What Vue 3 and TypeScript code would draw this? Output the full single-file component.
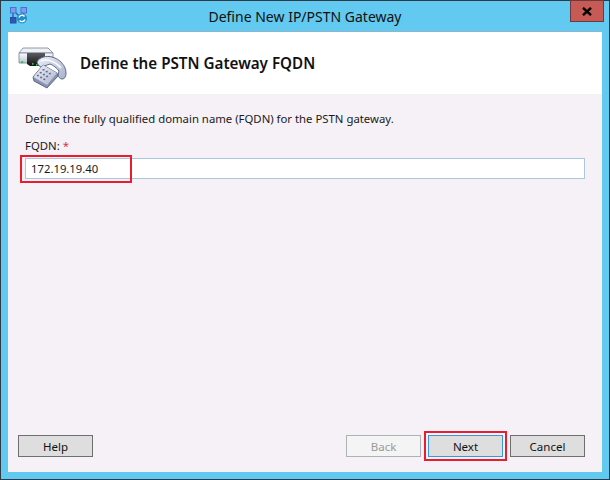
<script setup lang="ts">
const fqdn = '172.19.19.40'
const keys = [0, 1, 2, 3, 4, 5, 6, 7, 8]
</script>

<template>
  <div class="window">
    <div class="titlebar">
      <svg class="app-icon" width="18" height="18" viewBox="0 0 18 18">
        <path d="M3 3 L14 14 M13.5 4 L13.5 10 M3 4 L3 14" stroke="#3a58b4" stroke-width="1.4" fill="none" />
        <rect x="0.5" y="0.5" width="5.5" height="5.5" fill="#7c9cec" stroke="#4d70d0" />
        <rect x="11" y="0.5" width="5.5" height="5.5" fill="#7c9cec" stroke="#4d70d0" />
        <rect x="0.5" y="10.5" width="5.5" height="5.5" fill="#2e58b8" stroke="#2a4aa0" />
        <circle cx="12" cy="11.5" r="5" fill="#1f8fc8" />
        <path d="M9 10.5 A3.2 3.2 0 0 1 14.5 9.5 M15 12.5 A3.2 3.2 0 0 1 9.6 13.5" stroke="#fff" stroke-width="1.4" fill="none" />
      </svg>
      <span class="title">Define New IP/PSTN Gateway</span>
      <div class="close">
        <svg width="10" height="9" viewBox="0 0 10 9">
          <path d="M1 0.8 L9 8.2 M9 0.8 L1 8.2" stroke="#000" stroke-width="2.4" />
        </svg>
      </div>
    </div>

    <div class="client">
      <header class="header">
        <svg class="phone" width="50" height="48" viewBox="0 0 50 48">
          <defs>
            <linearGradient id="case" x1="0" y1="0" x2="0" y2="1">
              <stop offset="0" stop-color="#fbfcfe" />
              <stop offset="1" stop-color="#bcc4d2" />
            </linearGradient>
            <linearGradient id="front" x1="0" y1="0" x2="0" y2="1">
              <stop offset="0" stop-color="#5a5c60" />
              <stop offset="1" stop-color="#121212" />
            </linearGradient>
            <linearGradient id="set" x1="0" y1="0" x2="1" y2="1">
              <stop offset="0" stop-color="#f1f4fa" />
              <stop offset="1" stop-color="#aab4cc" />
            </linearGradient>
            <linearGradient id="hand" x1="0" y1="0" x2="1" y2="1">
              <stop offset="0" stop-color="#eef1f8" />
              <stop offset="1" stop-color="#a6b1cb" />
            </linearGradient>
          </defs>
          <path d="M2 11 L6 6 H31 L36 11 Z" fill="#eef1f6" stroke="#7a8294" stroke-width="0.8" />
          <path d="M2 11 H36 V21 H2 Z" fill="url(#case)" stroke="#7a8294" stroke-width="0.8" />
          <path d="M10 11 H28 V21 L22 24 H13 L10 22 Z" fill="url(#front)" />
          <rect x="4" y="19" width="2.2" height="2.2" fill="#26d044" />
          <rect x="15" y="21" width="1.5" height="1.8" fill="#2fc244" />
          <rect x="19" y="22" width="1.5" height="1.8" fill="#2fc244" />
          <path d="M20 20 C22 15 30 13.5 35 15 C43 17 49 24 49 31 C49 34 48 37 45 37 C43 37 41.5 35 41 33 L42 29 C40 26 36 23 33 22 L27 24 C24 26 21 24 20 20 Z" fill="url(#hand)" stroke="#5f6a88" stroke-width="1" />
          <path d="M24 19 C30 16.5 38 19 44 26" stroke="#fbfcff" stroke-width="1.4" fill="none" />
          <path d="M16 35 L26 23 L40 31 L41 34 L30 46 L17 39 Z" fill="#8793b2" stroke="#5f6a88" stroke-width="1" />
          <path d="M16.5 35 L26 23 L40 31 L30 43 Z" fill="url(#set)" />
          <g fill="#5f6c8c">
            <rect
              v-for="k in keys"
              :key="k"
              :x="25.5 + (k % 3) * 3.2 - Math.floor(k / 3) * 2.8"
              :y="27 + (k % 3) * 1.9 + Math.floor(k / 3) * 2.9"
              width="2"
              height="1.5"
            />
          </g>
        </svg>
        <h1 class="heading">Define the PSTN Gateway FQDN</h1>
      </header>

      <main class="body">
        <p class="intro">Define the fully qualified domain name (FQDN) for the PSTN gateway.</p>
        <label class="label" for="fqdn">FQDN: <span class="req">*</span></label>
        <div class="field">
          <input id="fqdn" class="input" :value="fqdn" />
          <div class="mark"></div>
        </div>
      </main>

      <footer class="footer">
        <button class="btn">Help</button>
        <div class="spacer"></div>
        <button class="btn" disabled>Back</button>
        <button class="btn primary">Next</button>
        <button class="btn">Cancel</button>
      </footer>
    </div>
  </div>
</template>

<style>
html, body { margin: 0; padding: 0; background: #62c9f0; }
</style>

<style scoped>
.window {
  width: 610px;
  height: 480px;
  box-sizing: border-box;
  display: flex;
  flex-direction: column;
  background: #62c9f0;
  border: 1px solid #2e3a44;
  padding: 0 7px 7px 7px;
  font-family: "Noto Sans", "Open Sans", sans-serif;
  color: #1a1a1a;
}
.titlebar {
  height: 30px;
  flex: none;
  position: relative;
  display: flex;
  align-items: center;
  justify-content: center;
}
.app-icon {
  position: absolute;
  left: 2px;
  top: 6px;
}
.title {
  font-size: 14px;
  color: #111;
  margin-top: 1px;
}
.close {
  position: absolute;
  right: -2px;
  top: -1px;
  width: 34px;
  height: 22px;
  box-sizing: border-box;
  background: #c75a55;
  border: 1px solid #6b3a3f;
  display: flex;
  align-items: center;
  justify-content: center;
}
.client {
  flex: 1;
  display: flex;
  flex-direction: column;
  background: #f5f1f6;
  border-top: 1px solid #8fb4cc;
}
.header {
  height: 62px;
  flex: none;
  background: #fff;
  display: flex;
  align-items: center;
  box-sizing: border-box;
  padding-left: 9px;
}
.phone {
  flex: none;
  margin-top: 6px;
  margin-bottom: 0;
}
.heading {
  margin: 0 0 0 13px;
  font-size: 15.2px;
  font-weight: 600;
  color: #111;
}
.body {
  flex: 1;
  padding: 17px 17px 0 17px;
}
.intro {
  margin: 0;
  font-size: 11.35px;
  line-height: 16px;
}
.label {
  display: block;
  margin-top: 11px;
  font-size: 11.35px;
  line-height: 16px;
}
.req { color: #e0314a; }
.field {
  position: relative;
  margin-top: 4px;
}
.input {
  display: block;
  width: 100%;
  height: 21px;
  box-sizing: border-box;
  border: 1px solid #abc6df;
  background: #fff;
  outline: none;
  padding: 0 5px;
  font-family: inherit;
  font-size: 11.3px;
  color: #1a1a1a;
}
.mark {
  position: absolute;
  left: -5px;
  top: -3px;
  width: 112px;
  height: 28px;
  box-sizing: border-box;
  border: 2px solid #e81e2e;
  pointer-events: none;
}
.footer {
  display: flex;
  gap: 7px;
  padding: 0 17px 15px 10px;
  flex: none;
}
.spacer { flex: 1; }
.btn {
  width: 75px;
  height: 22px;
  box-sizing: border-box;
  border: 1px solid #6f6f6f;
  background: #dedede;
  font-family: inherit;
  font-size: 11.5px;
  color: #111;
  padding: 0;
}
.btn:disabled {
  background: #f4f4f4;
  border-color: #adb2b5;
  color: #9a9a9a;
}
.btn.primary {
  border-color: #3a96dd;
  outline: 2px solid #e81e2e;
  outline-offset: 2px;
}
</style>
